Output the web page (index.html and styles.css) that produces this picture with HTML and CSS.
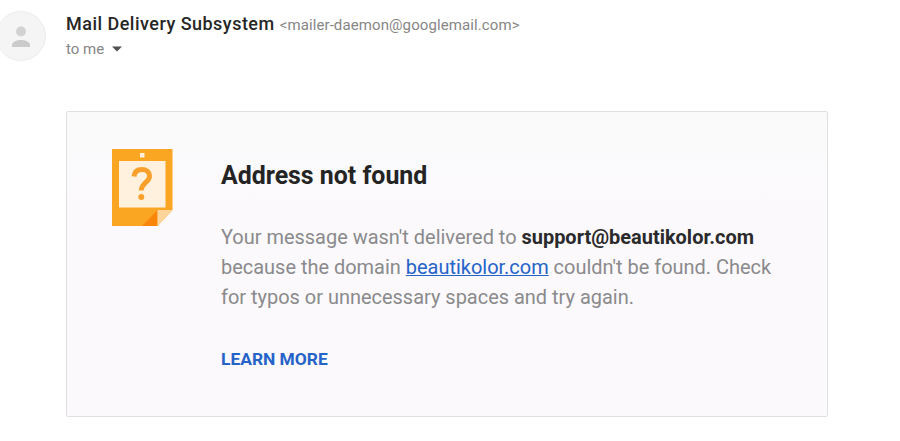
FILE: index.html
```html
<!DOCTYPE html>
<html lang="en">
  <head>
    <meta charset="utf-8">
    <title>Address not found</title>
    <link rel="stylesheet" href="styles.css">
  </head>
  <body>
    <div class="header">
      <svg class="avatar" width="48" height="64" viewBox="0 0 48 64">
        <ellipse cx="21" cy="36" rx="24.500" ry="24.500" fill="#f5f5f5" stroke="#ececec"/>
        <circle cx="21" cy="31.500" r="5" fill="#d2d2d2"/>
        <path d="M12 47v-2c0-3.500 5-5 9-5s9 1.500 9 5v2z" fill="#cbcbcb"/>
      </svg>
      <div class="sender">
        <div class="from">
          <span class="name">Mail Delivery Subsystem</span>
          <span class="email">&lt;mailer-daemon@googlemail.com&gt;</span>
        </div>
        <div class="to">
          <span>to me</span>
          <svg width="10" height="6" viewBox="0 0 10 6"><path d="M0 .5h10L5 5.500z" fill="#505050"/></svg>
        </div>
      </div>
    </div>
    <div class="card">
      <svg class="icon" width="61" height="78" viewBox="0 0 61 78">
        <path d="M0 0h60.500v61L45.500 77H0z" fill="#fba623"/>
        <path d="M7 12h46.500v46.500H7z" fill="#fff1de"/>
        <path d="M28 4h4.500v4.500H28z" fill="#fff1de"/>
        <path d="M30 77l15.500-16v16z" fill="#f9860a"/>
        <path d="M45.500 61h15l-15 16z" fill="#fdd59b"/>
        <path d="M22 27.500c.5-5 4-7 8-7s7.500 2.300 7.500 6.700c0 6-8.200 6.500-8.200 14.300" fill="none" stroke="#f9a02b" stroke-width="4.900"/>
        <circle cx="29.300" cy="48" r="3" fill="#f9a02b"/>
      </svg>
      <div class="content">
        <h1>Address not found</h1>
        <p>Your message wasn't delivered to <b>support@beautikolor.com</b><br>
          because the domain <a href="#">beautikolor.com</a> couldn't be found. Check<br>
          for typos or unnecessary spaces and try again.</p>
        <a class="more" href="#">LEARN MORE</a>
      </div>
    </div>
  </body>
</html>
```

FILE: styles.css
```css
* {
  box-sizing: border-box;
  margin: 0;
  padding: 0;
}

body {
  background: #fff;
  font-family: Roboto, "Liberation Sans", sans-serif;
  overflow: hidden;
}

svg {display: block;}

.header {display: flex; height: 111px;}
.avatar {flex-shrink: 0;}
.sender {margin-left: 18px; padding-top: 13px;}
.from {display: flex; align-items: baseline; line-height: 22px; white-space: nowrap;}
.name {font-size: 18px; font-weight: 500; color: #262626; letter-spacing: 0.48px;}
.email {margin-left: 5px; font-size: 15px; letter-spacing: 0.1px; color: #868686;}
.to {display: flex; align-items: center; margin-top: 3px; font-size: 15px; line-height: 20px; color: #868686;}
.to svg {margin-left: 8px;}

.card {
  display: flex;
  width: 762px;
  height: 306px;
  margin-left: 66px;
  padding: 37px 0 0 45px;
  border: 1px solid #e0e0e2;
  border-radius: 2px;
  background: linear-gradient(#fafafa, #fbf9fc 30%);
}
.icon {flex-shrink: 0;}
.content {margin-left: 48px; padding-top: 12px; white-space: nowrap;}
.content h1 {font-size: 24.9px; font-weight: 700; line-height: 30px; color: #242424;}
.content p {margin-top: 31px; font-size: 19.97px; line-height: 30px; color: #8a8a8c;}
.content b {font-weight: 700; color: #2a2a2c;}
.content a {color: #2563c9;}
.content .more {display: block; margin-top: 36px; font-size: 17.4px; font-weight: 700; line-height: 22px; text-decoration: none;}
```
